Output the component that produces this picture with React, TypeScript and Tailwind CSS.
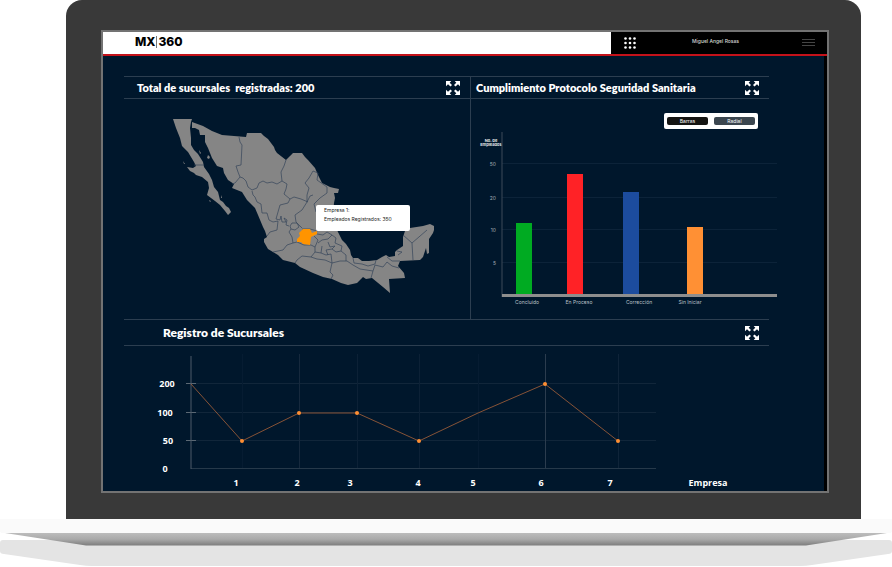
import React, { useState } from 'react';

type Bar = { label: string; x: number; labelX: number; top: number; color: string };

const bars: Bar[] = [
    { label: 'Concluido', x: 516, labelX: 527, top: 223, color: '#00ab22' },
    { label: 'En Proceso', x: 567, labelX: 579, top: 174, color: '#ff2226' },
    { label: 'Corrección', x: 623, labelX: 639, top: 192, color: '#1c4c9e' },
    { label: 'Sin Iniciar', x: 687, labelX: 690, top: 227, color: '#ff9034' },
];

const barTicks = [
    { value: '50', y: 164 },
    { value: '20', y: 198 },
    { value: '10', y: 230 },
    { value: '5', y: 263 },
];

const lineTicks = [
    { value: '200', x: 167, y: 383 },
    { value: '100', x: 165, y: 412 },
    { value: '50', x: 168, y: 440 },
    { value: '0', x: 165, y: 468 },
];

const companies = [
    { name: '1', x: 242, labelX: 236, y: 441, dot: true, grid: '#061c32' },
    { name: '2', x: 299, labelX: 297, y: 413, dot: true, grid: '#16293d' },
    { name: '3', x: 357, labelX: 350, y: 413, dot: true, grid: '#0c2136' },
    { name: '4', x: 419, labelX: 418, y: 441, dot: true, grid: '#0c2136' },
    { name: '5', x: 478, labelX: 473, y: 413, dot: false, grid: '#061c32' },
    { name: '6', x: 545, labelX: 541, y: 384, dot: true, grid: '#2b3c4e' },
    { name: '7', x: 618, labelX: 610, y: 441, dot: true, grid: '#0f2439' },
];

const ExpandButton = ({ label }: { label: string }) => (
    <button type="button" aria-label={label} className="text-white">
        <svg viewBox="0 0 16 16" className="block h-4 w-4" fill="currentColor">
            <path d="M1 1H6.300L4.700 2.700L7 5L5.500 6.500L3 4.300L1 6.300Z" />
            <path d="M15 1H9.700L11.300 2.700L9 5L10.500 6.500L13 4.300L15 6.300Z" />
            <path d="M1 15H6.300L4.700 13.300L7 11L5.500 9.500L3 11.700L1 9.700Z" />
            <path d="M15 15H9.700L11.300 13.300L9 11L10.500 9.500L13 11.700L15 9.700Z" />
        </svg>
    </button>
);

const PanelHeader = ({ title, className }: { title: string; className: string }) => (
    <div className={`flex items-center justify-between border-y border-[#2c3e50] pr-[9px] ${className}`}>
        <h2 className="whitespace-pre font-['Lato','Open_Sans',sans-serif] leading-4 font-extrabold text-white">{title}</h2>
        <ExpandButton label={`Expandir ${title}`} />
    </div>
);

const MexicoMap = () => (
    <div className="relative">
        <svg viewBox="124 99 346 220" className="block w-full" role="img" aria-label="Mapa de sucursales">
            <g fill="#858585">
                {/* Baja California */}
                <path d="M173 119L192 119L191 122L190 128L191 138L191 145L194 150L198 154L203 162L204 167L209 174L212 180L214 187L218 192L220 200L223 202L226 206L229 208L231 212L228 215L225 211L220 205L215 201L207 195L209 188L208 182L202 177L196 175L194 173L190 171L187 167L193 168L196 166L194 162L188 152L182 146L180 138L176 128Z" />
                <path d="M192 122L203 126L212 131L222 135L246 137L247 133L261 133L264 136L268 139L274 147L275 150L277 153L286 160L290 156L293 153L302 153L305 157L308 160L315 168L318 175L322 183L330 187L334 188L339 189L338 193L334 193L335 198L334 203L333 215L337 230L342 240L346 244L350 250L351 255L353 258L358 258L362 261L369 261L377 260L382 257L386 255L389 257L395 256L395 252L397 250L403 246L403 237L405 231L410 228L423 226L430 224L434 226L434 230L433 233L429 239L429 253L427 254L426 248L425 251L423 257L420 260L400 261L398 266L404 273L405 278L389 279L390 293L383 287L372 278L366 279L363 277L357 283L348 285L341 283L332 279L323 277L313 273L300 267L295 263L283 260L278 255L273 252L268 249L264 242L264 239L267 237L265 231L263 227L258 215L255 208L247 200L242 192L232 188L234 184L228 180L224 173L223 168L220 167L217 166L212 158L210 153L208 148L205 142L205 135L200 135L199 130L195 128L192 128Z" />
                <path d="M199 150l2 3-1 1zM208 155l2 2-1 2-2-1zM183 161l2 3-1 0zM221 195l1 3-1 0zM209 200l2 1-1 1z" />
            </g>
            <g fill="none" stroke="#35455a" strokeWidth="0.7" strokeLinejoin="round">
                <path d="M194 165L204 165M239 137L240 142L242 145L241 165L236 166L238 172L240 177L235 183L232 184" />
                <path d="M240 177L243 178L246 181L248 187L252 190L257 188L259 183L263 181L267 183L272 182L277 184L282 181L287 184L286 189L284 194L290 199L294 197L301 199L308 202" />
                <path d="M286 160L284 166L281 172L282 181M252 191L253 195L255 197L257 202L261 204L262 213L267 213L269 220L273 222L278 221" />
                <path d="M290 199L288 203L280 205L278 212L276 219L280 220L281 216L282 222L286 222L284 218L287 220L286 225L289 226" />
                <path d="M313 171L309 178L305 183L309 188L307 195L307 202M313 171L318 173L317 180L327 187L327 193L320 198L314 204L316 212L320 216" />
                <path d="M307 202L310 196L313 195M307 202L302 210L295 215L296 222L302 228M290 226L292 223L297 223L299 227L295 230L291 229Z" />
                <path d="M302 229L310 229L317 231L323 228L329 226L334 219" />
                <path d="M278 221L277 230L270 232L267 236M273 252L283 250L287 245L293 243L292 237L289 232L291 229" />
                <path d="M293 243L297 242L304 245L311 245L315 247L315 252L311 257L302 256L297 260L295 263M315 247L318 240L314 236M311 257L317 259L325 260L332 263L330 272L333 275L331 279" />
                <path d="M317 234L323 235L327 232L332 235L328 239L322 240L318 243M332 235L336 238L335 243L342 246L341 251L336 252L332 249L335 246L330 247L328 242M322 246L321 253L326 255L331 254L332 263M315 252L321 253M332 249L326 250L328 255" />
                <path d="M332 263L340 261L347 261L353 265L360 269L373 271L371 278M341 251L346 255L346 261M353 258L354 263L362 264L368 266L375 264L376 260M373 271L375 265L383 267L387 262L392 266L399 268" />
                <path d="M387 257L392 261L400 261M403 235L412 243L427 230M412 243L413 260M397 251L402 252L398 255" />
            </g>
            <path d="M303 229L310 229L312 233L317 231L317 234L311 237L310 245L303 244L301 242L297 242L297 239L300 236L299 233Z" fill="#ff9400" />
        </svg>
        {/* state tooltip */}
        <div className="absolute top-[48%] left-[55.5%] w-[94px] rounded-[2px] bg-white px-2 pt-px pb-[7px] font-['Inter',sans-serif] text-[5px] leading-[9px] whitespace-nowrap text-[#222]">
            <p>Empresa 1:</p>
            <p>Empleados Registrados: 350</p>
        </div>
    </div>
);

const BarChart = () => (
    <svg viewBox="471 129 298 190" className="block w-full overflow-visible font-['Inter',sans-serif]" role="img" aria-label="Empleados por estado">
        {barTicks.map((t) => (
            <g key={t.value}>
                <path d={`M502 ${t.y - 0.5}H777`} stroke="#0c2339" />
                <text x="496" y={t.y + 2} textAnchor="end" fontSize="5" fill="#a5adb5">{t.value}</text>
            </g>
        ))}
        <text textAnchor="middle" fontSize="4" fontWeight="700" fill="#e2e5e8">
            <tspan x="491" y="142">No. de</tspan>
            <tspan x="491" y="146">Empleados</tspan>
        </text>
        {bars.map((b) => (
            <g key={b.label}>
                <rect x={b.x} y={b.top} width="16" height={295 - b.top} fill={b.color} />
                <text x={b.labelX} y="304" textAnchor="middle" fontSize="5" fill="#bcc2c8">{b.label}</text>
            </g>
        ))}
        <path d="M502 132V297" stroke="#3d4b59" />
        <path d="M502 295.500H777" stroke="#8e8e8e" strokeWidth="3" />
    </svg>
);

const LineChart = () => (
    <svg viewBox="124 346 645 145" className="block w-full font-['Open_Sans','Noto_Sans',sans-serif]" role="img" aria-label="Registro por empresa">
        {lineTicks.map((t) => (
            <g key={t.value}>
                <path d={`M191 ${t.y + 0.5}H656`} stroke={t.value === '0' ? '#26394a' : '#11263a'} />
                {t.value !== '0' && <path d={`M186 ${t.y + 0.5}H196`} stroke="#5b6874" />}
                <text x={t.x} y={t.y + 4} textAnchor="middle" fontSize="9" fontWeight="700" fill="#fff">{t.value}</text>
            </g>
        ))}
        {companies.map((c) => (
            <path key={c.name} d={`M${c.x + 0.5} 354V468`} stroke={c.grid} />
        ))}
        <path d="M191 356V469" stroke="#4c5a68" />
        <polyline
            points={`191,384 ${companies.map((c) => `${c.x},${c.y}`).join(' ')}`}
            fill="none"
            stroke="#a8623a"
            strokeWidth="0.8"
        />
        {companies.map((c) => (
            <g key={c.name}>
                {c.dot && <circle cx={c.x} cy={c.y} r="2" fill="#ff8f33" />}
                <text x={c.labelX} y="486" textAnchor="middle" fontSize="9" fontWeight="700" fill="#fff">{c.name}</text>
            </g>
        ))}
        <text x="708" y="486" textAnchor="middle" fontSize="9" fontWeight="700" fill="#fff">Empresa</text>
    </svg>
);

const TopBar = () => (
    <header className="flex h-[24px] border-b-2 border-[#c4121a] bg-white">
        <div className="flex flex-1 items-center pb-[2px] pl-8 font-['Inter',sans-serif] text-[12px] leading-4 font-extrabold text-black">
            <span>MX</span>
            <span className="mx-px h-3 w-px bg-[#777]" />
            <span>360</span>
        </div>
        <div className="flex w-[216px] items-center bg-black pr-3 pl-[13px]">
            <button type="button" aria-label="Aplicaciones">
                <svg viewBox="0 0 12 12" className="block h-3 w-3" fill="#fff">
                    {[1.5, 6, 10.5].map((y) => [1.5, 6, 10.5].map((x) => <circle key={`${x}-${y}`} cx={x} cy={y} r="1.3" />))}
                </svg>
            </button>
            <span className="ml-14 pb-1 font-['Inter',sans-serif] text-[5px] leading-[6px] font-medium text-[#d5d5d5]">Miguel Angel Rosas</span>
            <button type="button" aria-label="Menú" className="ml-auto">
                <svg viewBox="0 0 13 8" className="block h-2 w-[13px]" stroke="#454545">
                    <path d="M0 .5H13M0 3.500H13M0 6.500H13" />
                </svg>
            </button>
        </div>
    </header>
);

export default function App() {
    const [view, setView] = useState<'Barras' | 'Radial'>('Barras');

    return (
        <main className="bg-white">
            {/* laptop lid */}
            <div className="mr-[31px] ml-[66px] rounded-t-[16px] bg-[#393939] pt-[30px] pr-8 pb-[26px] pl-[35px]">
                <div className="border-2 border-[#737373] bg-black">
                    <TopBar />
                    <div className="mr-[3px] bg-[#00172c] pt-5 pr-[55px] pl-[21px]">
                        <div className="grid grid-cols-[346fr_299fr]">
                            <section>
                                <PanelHeader title="Total de sucursales  registradas: 200" className="h-[23px] pl-[13px] text-[11px]" />
                                <MexicoMap />
                            </section>
                            <section className="border-l border-[#2c3e50]">
                                <PanelHeader title="Cumplimiento Protocolo Seguridad Sanitaria" className="h-[23px] pl-[5px] text-[11px]" />
                                <div className="flex justify-end pt-[14px] pr-[11px]">
                                    <div className="flex h-4 w-[94px] items-center justify-between rounded-[2px] bg-white px-[3px]">
                                        {(['Barras', 'Radial'] as const).map((name) => (
                                            <button
                                                key={name}
                                                type="button"
                                                aria-pressed={view === name}
                                                onClick={() => setView(name)}
                                                className={`h-2 w-[41px] rounded-[2px] font-['Inter',sans-serif] text-[5px] leading-[8px] text-white ${view === name ? 'bg-[#141412]' : 'bg-[#3b464f]'}`}
                                            >
                                                {name}
                                            </button>
                                        ))}
                                    </div>
                                </div>
                                <BarChart />
                            </section>
                        </div>
                        <section>
                            <PanelHeader title="Registro de Sucursales" className="h-[27px] pl-[39px] text-[12px]" />
                            <LineChart />
                        </section>
                    </div>
                </div>
            </div>
            {/* laptop base */}
            <svg viewBox="0 0 892 48" preserveAspectRatio="none" className="block h-12 w-full" aria-hidden="true">
                <defs>
                    <linearGradient id="hinge" x1="0" y1="0" x2="0" y2="1">
                        <stop offset="0" stopColor="#bcbcbc" />
                        <stop offset="0.5" stopColor="#a9a9a9" />
                        <stop offset="1" stopColor="#7d7d7d" />
                    </linearGradient>
                </defs>
                <path d="M0 0H892V12Q892 14 889 14H3Q0 14 0 12Z" fill="#fafafa" />
                <path d="M3 21H889Q892 21 892 24V32Q892 35 888 35L812 46Q806 47 800 47H92Q86 47 80 46L4 35Q0 35 0 32V24Q0 21 3 21Z" fill="#e4e4e4" />
                <path d="M5 14H887L806 26.500H86Z" fill="url(#hinge)" />
            </svg>
        </main>
    );
}
